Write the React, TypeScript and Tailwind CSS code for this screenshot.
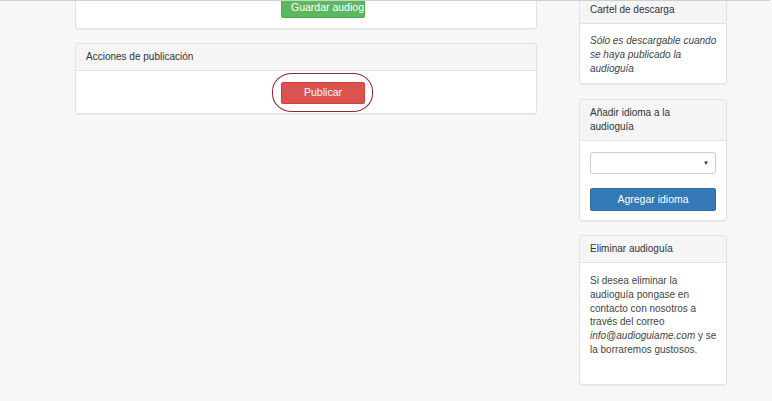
import React from "react";

const font = { fontFamily: '"Liberation Sans", Arial, sans-serif' };

function Panel({ children, className = "" }: { children: React.ReactNode; className?: string }) {
  return (
    <div className={`bg-white border border-[#e2e2e2] rounded-[3px] shadow-[0_1px_1px_rgba(0,0,0,0.05)] ${className}`}>
      {children}
    </div>
  );
}

function Heading({ children }: { children: React.ReactNode }) {
  return (
    <div className="bg-[#f5f5f5] border-b border-[#e2e2e2] rounded-t-[3px] px-[10px] py-[6px] leading-[14px] text-[#333]">
      {children}
    </div>
  );
}

export default function App() {
  return (
    <div className="relative w-[772px] h-[401px] overflow-hidden bg-[#f7f7f7] text-[10px]" style={font}>
      <div className="absolute top-0 left-0 right-[2px] h-px bg-[#cfcfcf] z-10" />
      <div className="flex gap-[42px] pl-[75px]">
        {/* Left column */}
        <div className="w-[462px] flex flex-col gap-[14px] -mt-[10px]">
          <Panel>
            <div className="flex pl-[205px] pt-[5px] pb-[10px]">
              <div className="w-[84px] h-[22px] bg-[#5cb85c] border border-[#4cae4c] rounded-[2px] overflow-hidden whitespace-nowrap text-white pl-[9px] leading-[20px] text-[10.5px]">
                Guardar audioguía
              </div>
            </div>
          </Panel>
          <Panel>
            <Heading>Acciones de publicación</Heading>
            <div className="flex pl-[205px] pt-[11px] pb-[9px]">
              <div className="relative">
                <div className="w-[84px] h-[22px] bg-[#d9534f] border border-[#d43f3a] rounded-[2px] text-white flex items-center justify-center text-[10.5px]">
                  Publicar
                </div>
                <div className="absolute -left-[9px] -top-[9px] w-[101px] h-[39px] border border-[#8a2a38] rounded-[20px/18px]" />
              </div>
            </div>
          </Panel>
        </div>

        {/* Right column */}
        <div className="w-[148px] flex flex-col -mt-[4px] text-[10px]">
          <Panel>
            <Heading>Cartel de descarga</Heading>
            <div className="px-[10px] pt-[10px] pb-[7px] italic leading-[14px] text-[#444] whitespace-nowrap">
              Sólo es descargable cuando
              <br />
              se haya publicado la
              <br />
              audioguía
            </div>
          </Panel>
          <Panel className="mt-[15px]">
            <Heading>
              Añadir idioma a la
              <br />
              audioguía
            </Heading>
            <div className="px-[10px] pt-[11px] pb-[9px] flex flex-col">
              <div className="h-[22px] bg-white border border-[#cccccc] rounded-[3px] flex items-center justify-end pr-[6px] text-[6px] text-[#333]">
                ▼
              </div>
              <div className="mt-[14px] h-[23px] bg-[#337ab7] border border-[#2e6da4] rounded-[2px] text-white flex items-center justify-center text-[10.5px]">
                Agregar idioma
              </div>
            </div>
          </Panel>
          <Panel className="mt-[14px]">
            <Heading>Eliminar audioguía</Heading>
            <div className="h-[121px] px-[10px] pt-[11px] leading-[13.8px] text-[#444] whitespace-nowrap">
              Si desea eliminar la
              <br />
              audioguía pongase en
              <br />
              contacto con nosotros a
              <br />
              través del correo
              <br />
              <span className="italic">info@audioguiame.com</span> y se
              <br />
              la borraremos gustosos.
            </div>
          </Panel>
        </div>
      </div>
    </div>
  );
}
